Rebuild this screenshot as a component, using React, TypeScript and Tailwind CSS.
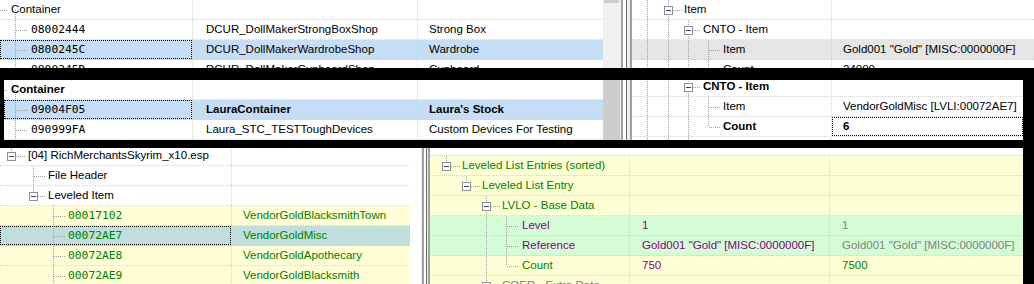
import React from 'react';

type Op = { v: number; p?: 'f' | 't' | 'b' } | { h: [number, number] } | { box: number };

function Lines({ ops, w, h = 20, m = 10 }: { ops: Op[]; w: number; h?: number; m?: number }) {
  return (
    <svg className="pointer-events-none absolute left-0 top-0" width={w} height={h}>
      {ops.map((o, i) => {
        if ('v' in o) {
          const y1 = o.p === 'b' ? m : 0;
          const y2 = o.p === 't' ? m : h;
          return (
            <line key={i} x1={o.v + 0.5} x2={o.v + 0.5} y1={y1} y2={y2} stroke="#a0a0a0" strokeDasharray="1 1" shapeRendering="crispEdges" />
          );
        }
        if ('h' in o) {
          return (
            <line key={i} x1={o.h[0]} x2={o.h[1]} y1={m + 0.5} y2={m + 0.5} stroke="#a0a0a0" strokeDasharray="1 1" shapeRendering="crispEdges" />
          );
        }
        return (
          <g key={i}>
            <rect x={o.box - 4 + 0.5} y={m - 4 + 0.5} width={8} height={8} fill="#ffffff" stroke="#8e8f8f" shapeRendering="crispEdges" />
            <line x1={o.box - 2} x2={o.box + 3} y1={m + 0.5} y2={m + 0.5} stroke="#2c4a86" shapeRendering="crispEdges" />
          </g>
        );
      })}
    </svg>
  );
}

function Row({ className = '', children }: { className?: string; children?: React.ReactNode }) {
  return <div className={`flex h-[20px] shrink-0 border-b border-dotted border-[#d4d4d4] ${className}`}>{children}</div>;
}

function Cell({
  className = '',
  lines,
  lw = 200,
  focus,
  children,
}: {
  className?: string;
  lines?: Op[];
  lw?: number;
  focus?: boolean;
  children?: React.ReactNode;
}) {
  return (
    <div className={`relative flex h-full shrink-0 items-center whitespace-nowrap ${className}`}>
      {lines && <Lines w={lw} ops={lines} />}
      {focus && <div className="pointer-events-none absolute inset-0 border border-dotted border-black" />}
      {children !== undefined && <span className="relative">{children}</span>}
    </div>
  );
}

const mono = "font-['DejaVu_Sans_Mono',monospace] text-[11.3px]";
const colB = 'border-r border-dotted border-[#d4d4d4]';

function Splitter() {
  return (
    <div className="flex h-full w-[12px] shrink-0">
      <div className="w-px bg-[#f0f0f0]" />
      <div className="w-[2px] bg-[#a0a0a0]" />
      <div className="w-[3px] bg-white" />
      <div className="w-px bg-[#696969]" />
      <div className="w-[3px] bg-[#f0f0f0]" />
      <div className="w-[2px] bg-[#a0a0a0]" />
    </div>
  );
}

function Splitter3() {
  return (
    <div className="flex h-full w-[9px] shrink-0">
      <div className="w-px bg-[#f0f0f0]" />
      <div className="w-[2px] bg-[#a0a0a0]" />
      <div className="w-[2px] bg-white" />
      <div className="w-px bg-[#696969]" />
      <div className="w-px bg-[#f0f0f0]" />
      <div className="w-[2px] bg-[#a0a0a0]" />
    </div>
  );
}

function List1() {
  const leaf: Op[] = [{ v: 15 }, { h: [16, 28] }];
  return (
    <div className="flex h-full w-[603px] shrink-0 flex-col overflow-hidden bg-white">
      <Row>
        <Cell className={`w-[193px] pl-[11px] ${colB}`} lw={193} lines={[{ h: [0, 8] }, { v: 15, p: 'b' }]}>
          Container
        </Cell>
        <Cell className={`w-[225px] ${colB}`} />
        <Cell className="flex-1" />
      </Row>
      <Row>
        <Cell className={`w-[193px] pl-[31px] ${colB}`} lw={193} lines={leaf}>
          <span className={mono}>08002444</span>
        </Cell>
        <Cell className={`w-[225px] pl-[13px] ${colB}`}>DCUR_DollMakerStrongBoxShop</Cell>
        <Cell className="flex-1 pl-[11px]">Strong Box</Cell>
      </Row>
      <Row className="bg-[#c5def5]">
        <Cell className={`w-[193px] pl-[31px] ${colB}`} lw={193} lines={leaf} focus>
          <span className={mono}>0800245C</span>
        </Cell>
        <Cell className={`w-[225px] pl-[13px] ${colB}`}>DCUR_DollMakerWardrobeShop</Cell>
        <Cell className="flex-1 pl-[11px]">Wardrobe</Cell>
      </Row>
      <Row>
        <Cell className={`w-[193px] pl-[31px] ${colB}`} lw={193} lines={leaf}>
          <span className={mono}>0800245D</span>
        </Cell>
        <Cell className={`w-[225px] pl-[13px] ${colB}`}>DCUR_DollMakerCupboardShop</Cell>
        <Cell className="flex-1 pl-[11px]">Cupboard</Cell>
      </Row>
    </div>
  );
}

function Right1() {
  return (
    <div className="flex h-full flex-1 flex-col overflow-hidden bg-white">
      <Row>
        <Cell className={`w-[200px] pl-[52px] ${colB}`} lines={[{ v: 15 }, { v: 36 }, { box: 36 }, { h: [41, 50] }]}>
          Item
        </Cell>
        <Cell className="flex-1" />
      </Row>
      <Row>
        <Cell className={`w-[200px] pl-[71px] ${colB}`} lines={[{ v: 15 }, { v: 36 }, { v: 56 }, { box: 56 }, { h: [61, 69] }]}>
          CNTO - Item
        </Cell>
        <Cell className="flex-1" />
      </Row>
      <Row className="bg-[#e5e5e5]">
        <Cell className={`w-[200px] pl-[91px] ${colB}`} lines={[{ v: 15 }, { v: 36 }, { v: 56 }, { v: 76 }, { h: [77, 89] }]}>
          Item
        </Cell>
        <Cell className="flex-1 pl-[11px]">Gold001 "Gold" [MISC:0000000F]</Cell>
      </Row>
      <Row>
        <Cell className={`w-[200px] pl-[91px] ${colB}`} lines={[{ v: 15 }, { v: 36 }, { v: 56 }, { v: 76, p: 't' }, { h: [77, 89] }]}>
          Count
        </Cell>
        <Cell className="flex-1 pl-[11px]">24000</Cell>
      </Row>
    </div>
  );
}

function List2() {
  const leaf: Op[] = [{ v: 11 }, { h: [12, 24] }];
  return (
    <div className="flex h-full w-[599px] shrink-0 flex-col overflow-hidden bg-white">
      <Row>
        <Cell className={`w-[189px] pl-[7px] font-bold ${colB}`} lw={189} lines={[{ h: [0, 4] }, { v: 11, p: 'b' }]}>
          Container
        </Cell>
        <Cell className={`w-[225px] ${colB}`} />
        <Cell className="flex-1" />
      </Row>
      <Row className="bg-[#c5def5]">
        <Cell className={`w-[189px] pl-[27px] ${colB}`} lw={189} lines={leaf} focus>
          <span className={mono}>09004F05</span>
        </Cell>
        <Cell className={`w-[225px] pl-[13px] font-bold ${colB}`}>LauraContainer</Cell>
        <Cell className="flex-1 pl-[11px] font-bold">Laura's Stock</Cell>
      </Row>
      <Row>
        <Cell className={`w-[189px] pl-[27px] ${colB}`} lw={189} lines={leaf}>
          <span className={mono}>090999FA</span>
        </Cell>
        <Cell className={`w-[225px] pl-[13px] ${colB}`}>Laura_STC_TESTToughDevices</Cell>
        <Cell className="flex-1 pl-[11px]">Custom Devices For Testing</Cell>
      </Row>
    </div>
  );
}

function Right2() {
  return (
    <div className="h-full flex-1 overflow-hidden bg-white">
      <div className="-mt-[3px] flex flex-col">
        <Row>
          <Cell className={`w-[200px] pl-[71px] font-bold ${colB}`} lines={[{ v: 15 }, { v: 36 }, { v: 56 }, { box: 56 }, { h: [61, 69] }]}>
            CNTO - Item
          </Cell>
          <Cell className="flex-1" />
        </Row>
        <Row>
          <Cell className={`w-[200px] pl-[91px] ${colB}`} lines={[{ v: 15 }, { v: 36 }, { v: 56 }, { v: 76 }, { h: [77, 89] }]}>
            Item
          </Cell>
          <Cell className="flex-1 pl-[11px]">VendorGoldMisc [LVLI:00072AE7]</Cell>
        </Row>
        <Row>
          <Cell className={`w-[200px] pl-[91px] font-bold ${colB}`} lines={[{ v: 15 }, { v: 36 }, { v: 56 }, { v: 76, p: 't' }, { h: [77, 89] }]}>
            Count
          </Cell>
          <Cell className="flex-1 pl-[11px] font-bold" focus>
            6
          </Cell>
        </Row>
        <Row>
          <Cell className={`w-[200px] ${colB}`} lines={[{ v: 15 }, { v: 36 }, { v: 56 }]} />
          <Cell className="flex-1" />
        </Row>
      </div>
    </div>
  );
}

function List3() {
  const leaf: Op[] = [{ v: 53 }, { h: [54, 66] }];
  const ids: [string, string][] = [
    ['00017102', 'VendorGoldBlacksmithTown'],
    ['00072AE7', 'VendorGoldMisc'],
    ['00072AE8', 'VendorGoldApothecary'],
    ['00072AE9', 'VendorGoldBlacksmith'],
  ];
  return (
    <div className="h-full w-[410px] shrink-0 overflow-hidden bg-white">
      <div className="-mt-[2px] flex flex-col">
        <Row>
          <Cell className={`w-[232px] pl-[28px] ${colB}`} lw={232} lines={[{ v: 11, p: 't' }, { box: 11 }, { h: [16, 26] }]}>
            [04] RichMerchantsSkyrim_x10.esp
          </Cell>
          <Cell className="flex-1" />
        </Row>
        <Row>
          <Cell className={`w-[232px] pl-[48px] ${colB}`} lw={232} lines={[{ v: 33 }, { h: [34, 46] }]}>
            File Header
          </Cell>
          <Cell className="flex-1" />
        </Row>
        <Row>
          <Cell className={`w-[232px] pl-[48px] ${colB}`} lw={232} lines={[{ v: 33, p: 't' }, { box: 33 }, { h: [38, 46] }]}>
            Leveled Item
          </Cell>
          <Cell className="flex-1" />
        </Row>
        {ids.map(([id, name]) => {
          const sel = id === '00072AE7';
          return (
            <Row key={id} className={sel ? 'bg-[#c0dedb]' : 'bg-[#fffed6]'}>
              <Cell className={`w-[232px] pl-[68px] text-[#008000] ${colB}`} lw={232} lines={leaf} focus={sel}>
                <span className={mono}>{id}</span>
              </Cell>
              <Cell className="flex-1 pl-[11px] text-[#008000]">{name}</Cell>
            </Row>
          );
        })}
      </div>
    </div>
  );
}

function Right3() {
  const yellow = 'bg-[#ffffd5]';
  const green = 'bg-[#d5fdd5]';
  return (
    <div className="flex h-full flex-1 flex-col overflow-hidden">
      <div className="h-[8px] shrink-0 border-b border-dotted border-[#c8c8c8] bg-white" />
      <Row className={yellow}>
        <Cell className={`w-[200px] pl-[32px] text-[#008000] ${colB}`} lines={[{ v: 16, p: 't' }, { box: 16 }, { h: [21, 30] }]}>
          Leveled List Entries (sorted)
        </Cell>
        <Cell className={`w-[200px] ${colB}`} />
        <Cell className="flex-1" />
      </Row>
      <Row className={yellow}>
        <Cell className={`w-[200px] pl-[52px] text-[#008000] ${colB}`} lines={[{ v: 36, p: 't' }, { box: 36 }, { h: [41, 50] }]}>
          Leveled List Entry
        </Cell>
        <Cell className={`w-[200px] ${colB}`} />
        <Cell className="flex-1" />
      </Row>
      <Row className={yellow}>
        <Cell className={`w-[200px] pl-[72px] text-[#008000] ${colB}`} lines={[{ v: 56 }, { box: 56 }, { h: [61, 70] }]}>
          LVLO - Base Data
        </Cell>
        <Cell className={`w-[200px] ${colB}`} />
        <Cell className="flex-1" />
      </Row>
      <Row className={green}>
        <Cell className={`w-[200px] pl-[92px] text-[#800080] ${colB}`} lines={[{ v: 56 }, { v: 76 }, { h: [77, 89] }]}>
          Level
        </Cell>
        <Cell className={`w-[200px] pl-[12px] text-[#800080] ${colB}`}>1</Cell>
        <Cell className="flex-1 pl-[12px] text-[#808080]">1</Cell>
      </Row>
      <Row className={green}>
        <Cell className={`w-[200px] pl-[92px] text-[#800080] ${colB}`} lines={[{ v: 56 }, { v: 76 }, { h: [77, 89] }]}>
          Reference
        </Cell>
        <Cell className={`w-[200px] pl-[12px] text-[#800080] ${colB}`}>Gold001 "Gold" [MISC:0000000F]</Cell>
        <Cell className="flex-1 pl-[12px] text-[#808080]">Gold001 "Gold" [MISC:0000000F]</Cell>
      </Row>
      <Row className={yellow}>
        <Cell className={`w-[200px] pl-[92px] text-[#008000] ${colB}`} lines={[{ v: 56 }, { v: 76, p: 't' }, { h: [77, 89] }]}>
          Count
        </Cell>
        <Cell className={`w-[200px] pl-[12px] text-[#800080] ${colB}`}>750</Cell>
        <Cell className="flex-1 pl-[12px] text-[#008000]">7500</Cell>
      </Row>
      <Row className={yellow}>
        <Cell className={`w-[200px] pl-[72px] text-[#808080] ${colB}`} lines={[{ v: 56, p: 't' }, { box: 56 }, { h: [61, 70] }]}>
          COED - Extra Data
        </Cell>
        <Cell className={`w-[200px] ${colB}`} />
        <Cell className="flex-1" />
      </Row>
    </div>
  );
}

export default function App() {
  return (
    <div className="flex h-[284px] w-[1034px] flex-col overflow-hidden bg-black font-['Liberation_Sans',Arial,sans-serif] text-[11.5px] text-black">
      <div className="flex h-[68px] w-[1034px] shrink-0 overflow-hidden">
        <List1 />
        <div className="flex h-full w-[17px] shrink-0 flex-col bg-[#f0f0f0]">
          <div className="mx-px h-[3px] bg-[#cdcdcd]" />
        </div>
        <Splitter />
        <Right1 />
      </div>
      <div className="h-[12px] shrink-0" />
      <div className="ml-[4px] flex h-[60px] w-[1019px] shrink-0 overflow-hidden">
        <List2 />
        <div className="flex h-full w-[17px] shrink-0 bg-[#f0f0f0]">
          <div className="h-full flex-1 bg-[#cdcdcd]" />
        </div>
        <Splitter />
        <Right2 />
      </div>
      <div className="h-[8px] shrink-0" />
      <div className="flex h-[136px] w-[1023px] shrink-0 overflow-hidden">
        <List3 />
        <div className="h-full w-[11px] shrink-0 bg-white" />
        <Splitter3 />
        <Right3 />
      </div>
    </div>
  );
}
